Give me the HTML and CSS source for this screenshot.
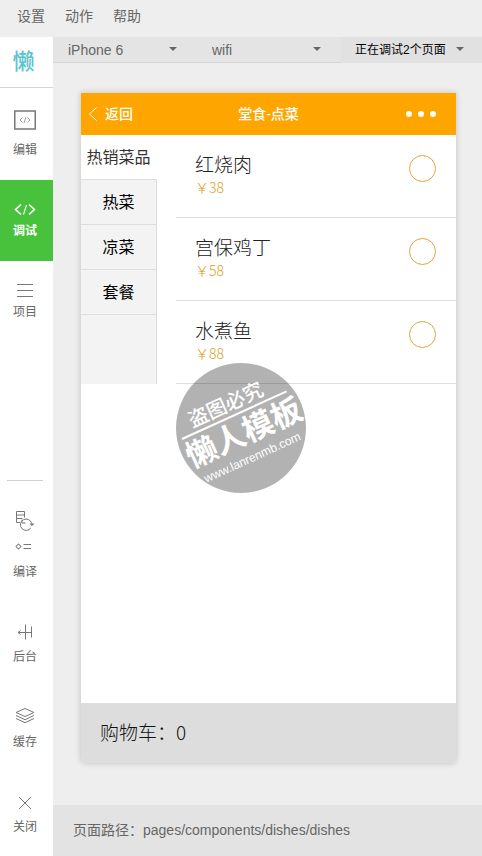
FILE: index.html
```
<!DOCTYPE html>
<html lang="zh-CN">
<head>
  <meta charset="UTF-8" />
  <meta name="viewport" content="width=device-width, initial-scale=1.0"/>
  <title>堂食-点菜</title>
  <link rel="stylesheet" href="styles.css">
</head>
<body>

<!-- Top menu -->
<header class="menu">
  <button type="button">设置</button>
  <button type="button">动作</button>
  <button type="button">帮助</button>
</header>

<div class="workspace">

  <!-- Sidebar -->
  <nav class="sidebar">
    <div class="logo"><span>懒</span></div>

    <button type="button" class="tool tool-edit">
      <svg width="22" height="20" viewBox="0 0 22 20" fill="none" stroke="#777">
        <rect x="0.75" y="1" width="20.5" height="18" stroke-width="1.5"/>
        <path d="M8.500 7.500L6 10l2.500 2.500M13.500 7.500L16 10l-2.500 2.500M12 7l-2 6" stroke="#999" stroke-width="0.9"/>
      </svg>
      编辑
    </button>
    <button type="button" class="tool active">
      <svg width="22" height="15" viewBox="0 0 22 15" fill="none" stroke="#fff" stroke-width="1.6">
        <path d="M7 2.500L1.500 7.500L7 12.500M15 2.500l5.500 5L15 12.500"/>
        <path d="M12.500 3l-3 9.500" stroke-width="1.1"/>
      </svg>
      调试
    </button>
    <button type="button" class="tool">
      <svg width="16" height="15" viewBox="0 0 16 15" stroke="#777">
        <path d="M0 1.500h16M0 7.500h16M0 13.500h16"/>
      </svg>
      项目
    </button>

    <div class="tools-bottom">
      <button type="button" class="tool tool-build">
        <svg width="20" height="42" viewBox="0 0 20 42" fill="none" stroke="#777">
          <path d="M5 12.500H1.500v-11h8v6M1.500 5h8M1.500 8.500h6"/>
          <path d="M16.700 13.500a5.700 5.700 0 1 0-.8 4.400M7 9.500v3.500h3.500"/>
          <path d="M14.500 13.500h5l-2.500 2.500z" fill="#777" stroke="none"/>
          <circle cx="3.500" cy="36.500" r="2"/>
          <path d="M3.500 33.500v1M3.500 38.500v1M.5 36.500h1M5.500 36.500h1" stroke-width="0.8"/>
          <path d="M8.500 34.500h7.500M8.500 38.500h7.500"/>
        </svg>
        编译
      </button>
      <button type="button" class="tool">
        <svg width="16" height="24" viewBox="0 0 16 24" fill="none" stroke="#777">
          <path d="M8.500 4.500v15M14.500 6.500v11M8.500 12.500H14.500M8 12.500H1M3.500 10.500l-2.500 2 2.500 2"/>
        </svg>
        后台
      </button>
      <button type="button" class="tool">
        <svg width="20" height="24" viewBox="0 0 20 24" fill="none" stroke="#777">
          <path d="M10 3.500l9 4-9 4-9-4z"/>
          <path d="M1 10.500l9 4.200 9-4.200M1 13.500l9 4.200 9-4.200"/>
        </svg>
        缓存
      </button>
      <button type="button" class="tool">
        <svg width="14" height="24" viewBox="0 0 14 24" stroke="#777">
          <path d="M1 7l12 12M13 7L1 19"/>
        </svg>
        关闭
      </button>
    </div>
  </nav>

  <main class="main">
    <!-- Device options -->
    <div class="toolbar">
      <div class="picker">
        <select aria-label="设备"><option>iPhone 6</option></select>
      </div>
      <div class="picker">
        <select aria-label="网络"><option>wifi</option></select>
      </div>
      <div class="picker picker-page">
        <select aria-label="页面"><option>正在调试2个页面</option></select>
      </div>
    </div>

    <!-- Simulator -->
    <section class="phone">
      <header class="phone-header">
        <a href="#" class="back">
          <svg width="10" height="16" viewBox="0 0 10 16" fill="none" stroke="#fff">
            <path d="M8.500 1.500L1.500 8l7 6.500"/>
          </svg>
          返回
        </a>
        <h1>堂食-点菜</h1>
        <button type="button" class="more" aria-label="更多"><i></i><i></i><i></i></button>
      </header>

      <div class="order">
        <div class="categories">
          <button type="button" class="selected">热销菜品</button>
          <button type="button">热菜</button>
          <button type="button">凉菜</button>
          <button type="button">套餐</button>
        </div>
        <ul class="dishes">
          <li>
            <label for="dish1">红烧肉<span class="price">￥38</span></label>
            <input type="checkbox" id="dish1">
          </li>
          <li>
            <label for="dish2">宫保鸡丁<span class="price">￥58</span></label>
            <input type="checkbox" id="dish2">
          </li>
          <li>
            <label for="dish3">水煮鱼<span class="price">￥88</span></label>
            <input type="checkbox" id="dish3">
          </li>
        </ul>
      </div>

      <footer class="cart">购物车：0</footer>

      <svg class="watermark" width="130" height="130" viewBox="0 0 130 130">
        <circle cx="65" cy="65" r="65" fill="#000" fill-opacity="0.3"/>
        <g transform="rotate(-24.500 6 76)" fill="#fff">
          <text x="20" y="70" font-size="20" font-weight="500">盗图必究</text>
          <rect x="6" y="75" width="115" height="2"/>
          <text x="3" y="107" font-size="31" font-weight="700">懒人模板</text>
          <text x="10" y="126" font-size="12">www.lanrenmb.com</text>
        </g>
      </svg>
    </section>

    <footer class="path">页面路径：pages/components/dishes/dishes</footer>
  </main>
</div>

</body>
</html>
```
FILE: styles.css
```
* {
  margin: 0;
  padding: 0;
  box-sizing: border-box;
}

body {
  display: flex;
  flex-direction: column;
  min-height: 100vh;
  background-color: #eee;
  color: #666;
  font-family: "Liberation Sans", "Noto Sans CJK SC", sans-serif;
  font-size: 14px;
  line-height: 20px;
}

button, select {
  border: none;
  background: none;
  color: inherit;
  font: inherit;
  cursor: pointer;
}

/* Top menu */
.menu {
  display: flex;
  gap: 20px;
  height: 37px;
  padding: 0 17px 5px;
}

.workspace {
  flex: 1;
  display: flex;
}

/* Sidebar */
.sidebar {
  display: flex;
  flex-direction: column;
  width: 53px;
  background-color: #fff;
}

.logo {
  display: flex;
  align-items: center;
  justify-content: center;
  height: 51px;
  padding-right: 6px;
  border-bottom: 1px solid #d5d5d5;
}

.logo span {
  color: #5bc4cb;
  font-size: 22px;
  font-weight: 500;
  line-height: 24px;
}

.tool {
  display: flex;
  flex-direction: column;
  align-items: center;
  justify-content: center;
  gap: 5px;
  height: 81px;
  padding: 1px 3px 0 0;
  font-size: 12px;
  line-height: 18px;
}

.tool-edit {
  gap: 11px;
  height: 92px;
}

.tool.active {
  background-color: #48c23d;
  color: #fff;
  font-weight: bold;
}

.tools-bottom {
  display: flex;
  flex-direction: column;
  margin-top: auto;
}

.tools-bottom::before {
  content: "";
  height: 1px;
  margin: 0 10px 0 7px;
  background-color: #d0d0d0;
}

.tools-bottom .tool {
  justify-content: flex-end;
  gap: 4px;
  height: 85px;
  padding-bottom: 20px;
}

.tools-bottom .tool-build {
  gap: 11px;
  height: 120px;
}

/* Device options */
.main {
  flex: 1;
  display: flex;
  flex-direction: column;
  min-width: 0;
}

.toolbar {
  display: grid;
  grid-template-columns: 144px 144px 1fr;
  height: 26px;
  background-color: #e4e4e4;
}

.picker {
  position: relative;
  border-bottom: 1px solid #d5d5d5;
}

.picker select {
  appearance: none;
  width: 100%;
  height: 25px;
  padding: 0 30px 0 15px;
}

.picker::after {
  content: "";
  position: absolute;
  top: 10px;
  right: 20px;
  border: 4px solid transparent;
  border-top-color: #666;
  border-bottom: none;
  pointer-events: none;
}

.picker-page {
  border-bottom-color: #e1e1e1;
  background-color: #e1e1e1;
  color: #000;
}

.picker-page select {
  padding-left: 14px;
  font-size: 12px;
}

.picker-page::after {
  right: 18px;
}

/* Simulator */
.phone {
  position: relative;
  flex: 1;
  display: flex;
  flex-direction: column;
  margin: 30px 26px 42px 28px;
  border-radius: 0 0 4px 4px;
  background-color: #fff;
  box-shadow: 0 0 6px rgba(0, 0, 0, 0.2);
}

.phone-header {
  display: grid;
  grid-template-columns: 1fr auto 1fr;
  align-items: center;
  height: 42px;
  padding: 0 20px 0 7px;
  background-color: #ffa500;
  color: #fff;
  font-weight: 500;
}

.phone-header h1 {
  padding-left: 13px;
  font-size: 14px;
  font-weight: 500;
}

.back {
  display: flex;
  align-items: center;
  gap: 7px;
  color: inherit;
  text-decoration: none;
}

.more {
  display: flex;
  gap: 6px;
  justify-self: end;
}

.more i {
  width: 6px;
  height: 6px;
  border-radius: 50%;
  background-color: #fff;
}

.order {
  display: flex;
  gap: 19px;
}

.categories {
  display: flex;
  flex-direction: column;
  width: 76px;
  background-color: #f3f3f3;
  color: #000;
  font-size: 16px;
}

.categories::after {
  content: "";
  flex: 1;
  border-right: 1px solid #ddd;
}

.categories button {
  height: 45px;
  padding-top: 2px;
  border-right: 1px solid #ddd;
  border-bottom: 1px solid #ddd;
}

.categories .selected {
  border-right-color: #fff;
  background-color: #fff;
  color: #333;
}

.dishes {
  flex: 1;
  list-style: none;
}

.dishes li {
  display: flex;
  justify-content: space-between;
  height: 83px;
  padding: 19px 20px 0 19px;
  border-bottom: 1px solid #ddd;
}

.dishes label {
  color: #222;
  font-family: "Noto Sans CJK SC", sans-serif;
  font-size: 19px;
  font-weight: 300;
}

.price {
  display: block;
  margin-top: 3px;
  color: #dba01c;
  font-size: 14px;
}

.dishes input {
  appearance: none;
  width: 27px;
  height: 27px;
  margin-top: 1px;
  border: 1px solid #e6a23c;
  border-radius: 50%;
}

.dishes input:checked {
  background-color: #ffa500;
}

.cart {
  height: 60px;
  margin-top: auto;
  padding: 0 19px;
  border-radius: 0 0 4px 4px;
  background-color: #ddd;
  color: #111;
  font-family: "Noto Sans CJK SC", sans-serif;
  font-size: 19px;
  font-weight: 300;
  line-height: 58px;
}

.watermark {
  position: absolute;
  top: 270px;
  left: 95px;
  overflow: visible;
  pointer-events: none;
}

.path {
  height: 51px;
  padding: 0 20px;
  background-color: #e3e3e3;
  line-height: 51px;
}
```
